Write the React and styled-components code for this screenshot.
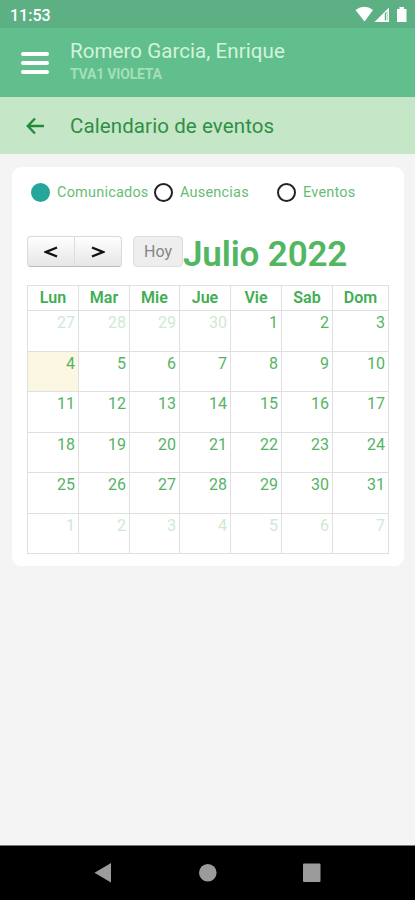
import React from 'react'
import styled, { createGlobalStyle } from 'styled-components'

const GlobalStyle = createGlobalStyle`
    * {
        box-sizing: border-box;
    }

    body {
        margin: 0;
        background: #f4f4f4;
        font-family: Roboto, sans-serif;
    }
`

const Screen = styled.div`
    display: flex;
    flex-direction: column;
    height: 900px;
    width: 415px;
    overflow: hidden;
`

const StatusBar = styled.div`
    display: flex;
    align-items: center;
    justify-content: space-between;
    height: 28px;
    padding: 2px 7px 0 10px;
    background: #5cb083;
    color: #fff;
    font-size: 16px;
    font-weight: 500;
`

const Header = styled.header`
    display: flex;
    height: 69px;
    padding-left: 21px;
    background: #61bf8d;
`

const MenuButton = styled.div`
    display: flex;
    flex-direction: column;
    gap: 5.3px;
    width: 28px;
    margin: 23.5px 21px 0 0;

    span {
        height: 4px;
        border-radius: 2px;
        background: #fff;
    }
`

const UserName = styled.div`
    margin-top: 10px;
    color: #d3f3dc;
    font-size: 20.5px;
    line-height: 26px;
    letter-spacing: .07px;
    white-space: nowrap;
`

const UserGroup = styled.div`
    color: #a5dfb9;
    font-size: 14px;
    font-weight: bold;
    line-height: 20px;
    letter-spacing: -.2px;
`

const TitleBar = styled.div`
    display: flex;
    align-items: center;
    height: 57px;
    padding-left: 26px;
    background: #c6e6c8;
    color: #2f8f45;
    font-size: 20.5px;
    letter-spacing: .1px;

    svg {
        margin-right: 25px;
    }
`

const Card = styled.main`
    flex: none;
    height: 399px;
    margin: 13px 11px 0 12px;
    padding: 15px 15px 0;
    border-radius: 9px;
    background: #fff;
`

const Filters = styled.div`
    display: grid;
    grid-template-columns: 123px 123px 1fr;
    padding-left: 4px;
`

const Filter = styled.div`
    display: flex;
    align-items: center;
    height: 20px;
    gap: 7px;
    color: #67bd73;
    font-size: 14.5px;
    letter-spacing: .2px;
    white-space: nowrap;
`

const Radio = styled.span`
    flex: none;
    width: 19px;
    height: 19px;
    border: 2px solid ${props => props.$checked ? '#26a69a' : '#222'};
    border-radius: 50%;
    background: ${props => props.$checked ? '#26a69a' : '#fff'};
`

const Toolbar = styled.div`
    display: flex;
    align-items: center;
    height: 32px;
    margin-top: 33px;
`

const ButtonGroup = styled.div`
    display: flex;
    width: 95px;
    height: 31px;
    margin-right: 11px;
    border: 1px solid #dadada;
    border-bottom-color: #bcbcbc;
    border-radius: 4px;
    background: linear-gradient(#fff, #e6e6e6);
`

const ArrowButton = styled.div`
    display: flex;
    flex: 1;
    align-items: center;
    justify-content: center;
    padding-top: 2px;

    & + & {
        border-left: 1px solid #dcdcdc;
    }
`

const TodayButton = styled.div`
    width: 50px;
    height: 31px;
    border: 1px solid #dedede;
    border-radius: 4px;
    background: #eee;
    color: #858585;
    font-size: 16px;
    line-height: 30px;
    text-align: center;
`

const Month = styled.h2`
    margin: 7px 0 0;
    color: #52b662;
    font-size: 35px;
    font-weight: 600;
    line-height: 40px;
    letter-spacing: -.15px;
    white-space: nowrap;
`

const Calendar = styled.div`
    display: grid;
    grid-template-columns: 51px 51px 50px 51px 51px 51px 56px;
    grid-template-rows: 25px 41px 40px 41px 40px 41px 40px;
    width: 362px;
    margin-top: 18px;
    border: solid #e0e0e0;
    border-width: 1px 0 0 1px;
`

const DayName = styled.div`
    border: solid #e0e0e0;
    border-width: 0 1px 1px 0;
    color: #42ad53;
    font-size: 16px;
    font-weight: 600;
    line-height: 24px;
    text-align: center;
`

const Day = styled.div`
    border: solid #e0e0e0;
    border-width: 0 1px 1px 0;
    padding: 2px 3px 0 0;
    background: ${props => props.$today ? '#fbf7e2' : '#fff'};
    color: ${props => props.$other ? '#cfe9d3' : '#55b463'};
    font-size: 16px;
    line-height: 19px;
    text-align: right;
`

const NavigationBar = styled.nav`
    display: flex;
    align-items: center;
    justify-content: center;
    height: 55px;
    margin-top: auto;
    border-top: 1px solid #777;
    background: #000;
`

const filters = ['Comunicados', 'Ausencias', 'Eventos']
const dayNames = ['Lun', 'Mar', 'Mie', 'Jue', 'Vie', 'Sab', 'Dom']

// 27 June to 7 August
const days = Array.from({ length: 42 }, (_, i) => {
    const date = new Date(2022, 5, 27 + i)
    return { number: date.getDate(), other: date.getMonth() !== 6 }
})

function StatusIcons() {
    return (
        <svg width="54" height="20" viewBox="354 4.500 54 20" fill="#fff">
            <path d="M355.500 9.500 Q364.500 3 373 9.500 L364.500 21 Z" />
            <path d="M374.500 21.500 L389 7 V21.500 Z" />
            <path d="M384.800 12.500 L387.400 11 V19.800 H384.800 Z" fill="#5cb083" />
            <path d="M386 12 H387 V19.500 H386 Z" fill="#d8f0e0" />
            <path d="M397 8.500 H399.500 V6.500 H404 V8.500 H406.500 V21.500 H397 Z" />
        </svg>
    )
}

export default function App() {
    return (
        <Screen>
            <GlobalStyle />
            <StatusBar>
                <span>11:53</span>
                <StatusIcons />
            </StatusBar>
            <Header>
                <MenuButton>
                    <span /><span /><span />
                </MenuButton>
                <div>
                    <UserName>Romero Garcia, Enrique</UserName>
                    <UserGroup>TVA1 VIOLETA</UserGroup>
                </div>
            </Header>
            <TitleBar>
                <svg width="19" height="18" viewBox="0 0 19 18" fill="none" stroke="#238a3a" strokeWidth="2.400">
                    <path d="M18 9H2M9 1.500L1.800 9L9 16.500" />
                </svg>
                <span>Calendario de eventos</span>
            </TitleBar>
            <Card>
                <Filters>
                    {filters.map((name, i) => (
                        <Filter key={name}>
                            <Radio $checked={i === 0} />
                            {name}
                        </Filter>
                    ))}
                </Filters>
                <Toolbar>
                    <ButtonGroup>
                        <ArrowButton>
                            <svg width="14" height="12" viewBox="0 0 14 12" fill="none" stroke="#111" strokeWidth="2.400">
                                <path d="M13 1.500L2 6L13 10.500" />
                            </svg>
                        </ArrowButton>
                        <ArrowButton>
                            <svg width="14" height="12" viewBox="0 0 14 12" fill="none" stroke="#111" strokeWidth="2.400">
                                <path d="M1 1.500L12 6L1 10.500" />
                            </svg>
                        </ArrowButton>
                    </ButtonGroup>
                    <TodayButton>Hoy</TodayButton>
                    <Month>Julio 2022</Month>
                </Toolbar>
                <Calendar>
                    {dayNames.map(name => <DayName key={name}>{name}</DayName>)}
                    {days.map((day, i) => (
                        <Day key={i} $other={day.other} $today={i === 7}>{day.number}</Day>
                    ))}
                </Calendar>
            </Card>
            <NavigationBar>
                <svg width="227" height="22" viewBox="94 862 227 22" fill="#9b9b9b">
                    <path d="M94.500 872.700L111 863V882.500Z" />
                    <circle cx="207.800" cy="872.700" r="8.800" />
                    <rect x="303" y="863.500" width="17.500" height="18.500" rx="1" />
                </svg>
            </NavigationBar>
        </Screen>
    )
}
